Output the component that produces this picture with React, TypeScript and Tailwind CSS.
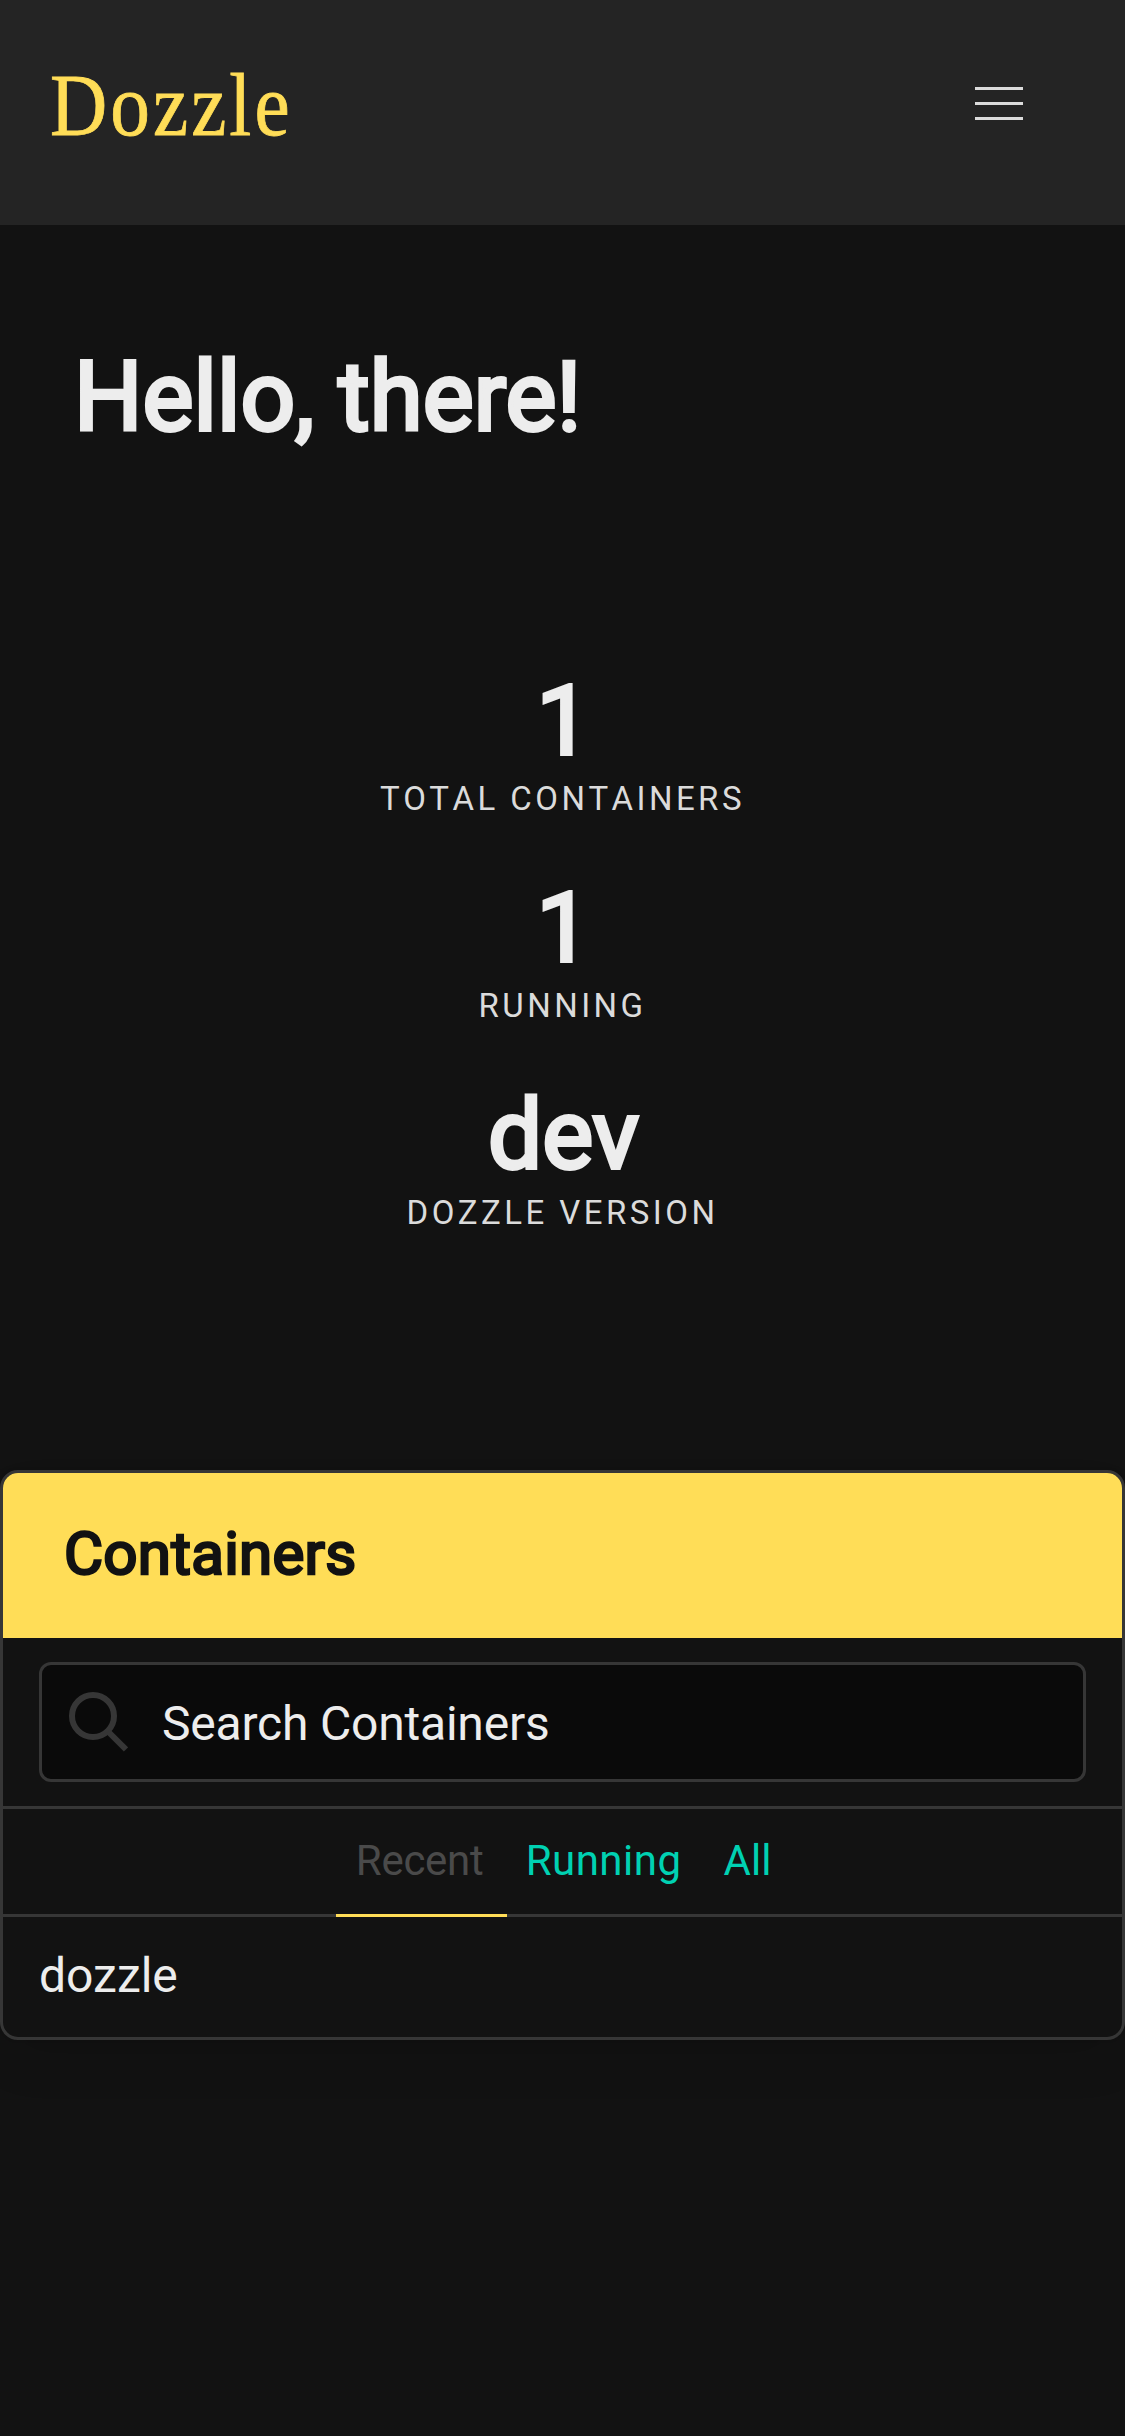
const stats = [
  { value: "1", label: "Total Containers" },
  { value: "1", label: "Running" },
  { value: "dev", label: "Dozzle Version" },
];

function Navbar() {
  return (
    <header className="flex h-[225px] items-start justify-between bg-[#242424] pl-[50px] pr-[102px]">
      <a className="origin-left scale-x-90 pt-[54px] font-['Liberation_Serif',serif] text-[88px] leading-[104px] tracking-[3.4px] text-[#ffdd57] [-webkit-text-stroke:0.8px_#ffdd57]">
        Dozzle
      </a>
      <button aria-label="Menu" className="mt-[87px] flex w-12 flex-col gap-3">
        <span className="h-[3px] w-full bg-[#dbdbdb]" />
        <span className="h-[3px] w-full bg-[#dbdbdb]" />
        <span className="h-[3px] w-full bg-[#dbdbdb]" />
      </button>
    </header>
  );
}

function Stat({ value, label }: { value: string; label: string }) {
  return (
    <div className="flex h-[207px] flex-col items-center">
      <p className="pl-[2px] text-[96px] leading-[110px] text-[#ededed] [-webkit-text-stroke:3.8px_#ededed]">{value}</p>
      <p className="-mt-[2px] text-[33px] leading-[50px] tracking-[3.45px] uppercase text-[#dbdbdb] [font-kerning:none]">
        {label}
      </p>
    </div>
  );
}

function SearchIcon() {
  return (
    <svg className="size-[60px]" viewBox="0 0 60 60" fill="none" stroke="#363636" strokeWidth="6">
      <circle cx="25" cy="24" r="21" />
      <path d="M40 39.5 L58 57.5" />
    </svg>
  );
}

function ContainersPanel() {
  return (
    <section className="h-[570px] overflow-hidden rounded-[18px] border-[3px] border-[#363636] shadow-[0_24px_48px_-6px_rgba(10,10,10,0.1),0_0_0_3px_rgba(10,10,10,0.02)]">
      <h2 className="flex h-[165px] items-center bg-[#ffdd57] px-[61px] pb-[4px] text-[60px] tracking-[0.3px] text-[#121212] [-webkit-text-stroke:2.6px_#121212]">
        Containers
      </h2>
      <div className="flex h-[171px] items-center border-b-[3px] border-[#363636] px-9">
        <div className="flex h-[120px] w-full items-center rounded-[12px] border-[3px] border-[#363636] bg-[#0a0a0a] pl-[26px]">
          <SearchIcon />
          <span className="pt-[3px] pl-[34px] text-[48px] tracking-[-0.2px] text-[#ededed]">Search Containers</span>
        </div>
      </div>
      <nav className="flex h-[108px] items-stretch justify-center border-b-[3px] border-[#363636] pl-[3px] text-[42px] text-[#00d1b2]">
        <a className="-mb-[3px] flex w-[171px] items-center justify-center border-b-[3px] border-[#ffdd57] pr-[3px] pb-[2px] tracking-[-0.3px] text-[#4a4a4a]">
          Recent
        </a>
        <a className="flex items-center pr-[21px] pb-[2px] pl-[19px] tracking-[0.5px]">Running</a>
        <a className="flex items-center px-[21px] pb-[2px]">All</a>
      </nav>
      <div className="flex h-[120px] items-center px-9 pb-[3px] text-[48px] text-[#ededed]">dozzle</div>
    </section>
  );
}

export default function App() {
  return (
    <div className="min-h-[2436px] w-full bg-[#121212] font-[Roboto,sans-serif]">
      <Navbar />
      <main>
        <div className="h-[441px] px-[74px] pt-[118px]">
          <h1 className="text-[96px] leading-[108px] tracking-[0.1px] text-[#ededed] [-webkit-text-stroke:3.8px_#ededed]">
            Hello, there!
          </h1>
        </div>
        <div className="h-[804px]">
          {stats.map((s) => (
            <Stat key={s.label} {...s} />
          ))}
        </div>
        <ContainersPanel />
      </main>
    </div>
  );
}
